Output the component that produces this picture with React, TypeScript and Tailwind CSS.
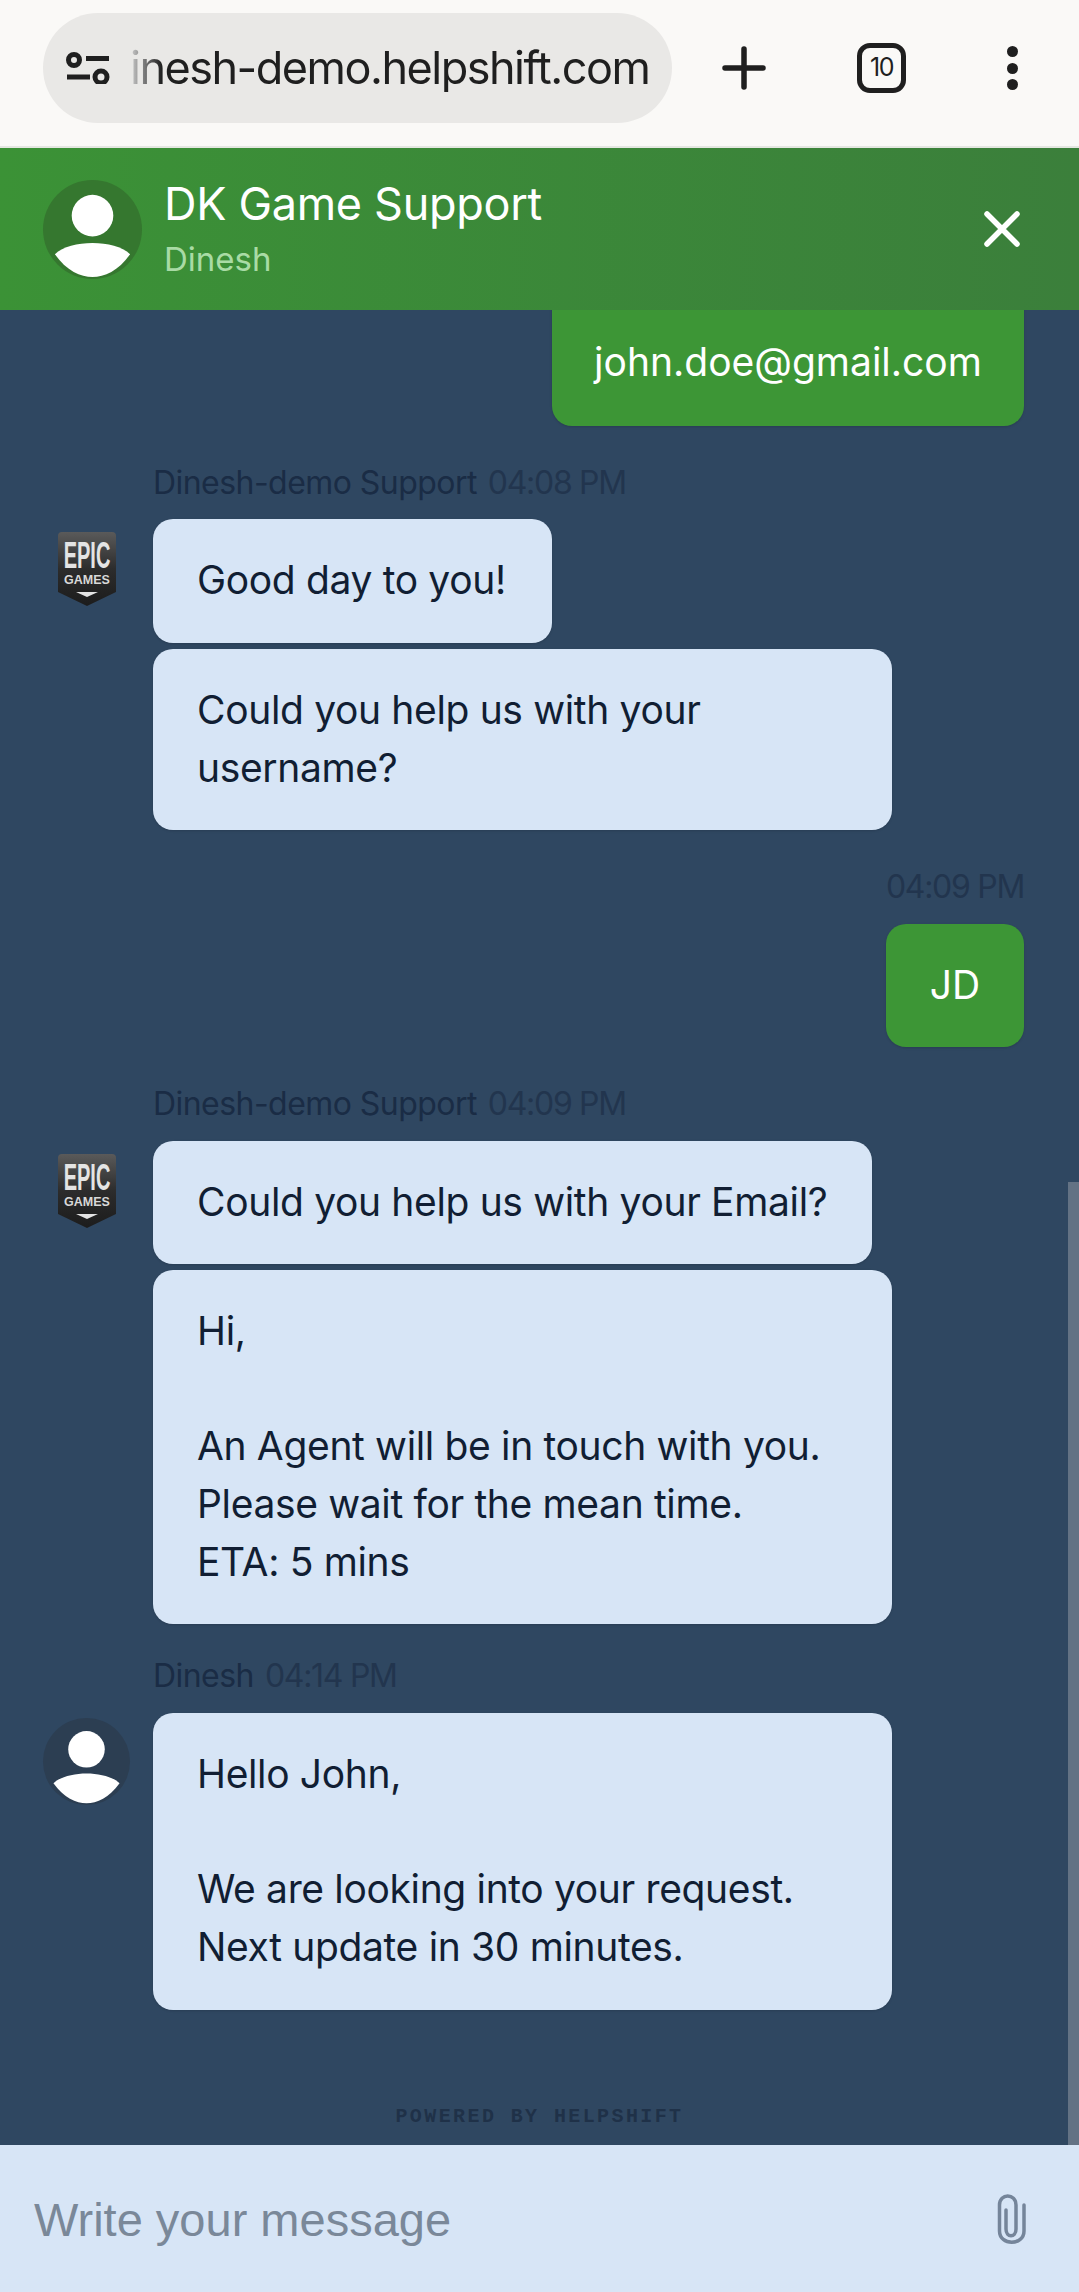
import React from 'react';

const font = "font-['Inter',sans-serif]";

const PersonIcon = () => (
  <svg viewBox="0 0 100 100" className="w-full h-full">
    <circle cx="50" cy="36" r="21" fill="#fff" />
    <path d="M12 75 C28 60 72 60 88 75 C76 92 62 98 50 98 C38 98 24 92 12 75 Z" fill="#fff" />
  </svg>
);

const EpicLogo = () => (
  <svg viewBox="0 0 58 74" className="w-[58px] h-[74px]">
    <defs>
      <linearGradient id="shield" x1="0" y1="0" x2="0" y2="1">
        <stop offset="0" stopColor="#5a5a5a" />
        <stop offset="0.5" stopColor="#2c2c2c" />
        <stop offset="1" stopColor="#1c1c1c" />
      </linearGradient>
    </defs>
    <path d="M4 0 H54 Q58 0 58 4 V60 L29 74 L0 60 V4 Q0 0 4 0 Z" fill="url(#shield)" />
    <text transform="translate(29 36) scale(1 1.8)" textAnchor="middle" fontFamily="Liberation Sans" fontWeight="700" fontSize="20" fill="#e4e4e4">EPIC</text>
    <text x="29" y="52" textAnchor="middle" fontFamily="Liberation Sans" fontWeight="700" fontSize="12.5" fill="#d8d8d8">GAMES</text>
    <path d="M18 60 H40 L29 65 Z" fill="#e4e4e4" />
  </svg>
);

const Meta = ({ name, time }: { name: string; time: string }) => (
  <div className="h-[38px] flex items-center gap-[11px] text-[32px] leading-none whitespace-nowrap">
    {name && <span className="text-[#1a2c45] tracking-[-0.55px]">{name}</span>}
    <span className="text-[#22354e] tracking-[-1.3px]">{time}</span>
  </div>
);

const Bubble = ({ children, className }: { children: React.ReactNode; className: string }) => (
  <div className={`rounded-[20px] bg-[#d7e5f6] pl-[44px] pr-[30px] pt-[32px] text-[39px] tracking-[-0.35px] leading-[57.7px] text-[#111e33] shadow-sm whitespace-pre-line ${className}`}>
    {children}
  </div>
);

const Outgoing = ({ children, className }: { children: React.ReactNode; className: string }) => (
  <div className={`rounded-[20px] bg-[#3d9636] text-white text-[39px] flex items-center justify-center shadow-sm ${className}`}>
    {children}
  </div>
);

const App: React.FC = () => {
  return (
    <div className={`relative w-[1079px] h-[2292px] flex flex-col overflow-hidden bg-[#2f4761] ${font}`}>
      {/* browser chrome */}
      <div className="h-[148px] shrink-0 bg-[#faf9f7] border-b-2 border-[#e4e7e1] flex items-center pl-[43px]">
        <div className="w-[629px] h-[110px] -mt-[10px] rounded-full bg-[#e9e8e6] flex items-center pl-[23px] gap-[20px]">
          <svg viewBox="0 0 44 32" className="w-[44px] h-[32px] shrink-0" fill="none" stroke="#1f1f1f" strokeWidth="5">
            <circle cx="8" cy="8" r="5.5" />
            <path d="M20 6.5 H43" />
            <path d="M1 25 H24" />
            <circle cx="35" cy="25" r="6" />
          </svg>
          <span className="text-[45px] tracking-[-1.5px] leading-none whitespace-nowrap bg-linear-to-r from-[#cfcfcf] to-[#1f1f1f] to-[32px] bg-clip-text text-transparent pb-[2px]">
            inesh-demo.helpshift.com
          </span>
        </div>
        <svg viewBox="0 0 44 44" className="w-[44px] h-[44px] ml-[50px] -mt-[10px]" fill="none" stroke="#1f1f1f" strokeWidth="5.5" strokeLinecap="round">
          <path d="M22 3 V41 M3 22 H41" />
        </svg>
        <div className="w-[49px] h-[50px] ml-[91px] -mt-[10px] rounded-[13px] border-[5px] border-[#1f1f1f] flex items-center justify-center text-[25px] tracking-[-1.5px] text-[#1f1f1f]">
          10
        </div>
        <div className="ml-[101px] -mt-[10px] flex flex-col gap-[5.5px]">
          <span className="w-[11px] h-[11px] rounded-full bg-[#1f1f1f]" />
          <span className="w-[11px] h-[11px] rounded-full bg-[#1f1f1f]" />
          <span className="w-[11px] h-[11px] rounded-full bg-[#1f1f1f]" />
        </div>
      </div>

      {/* chat header */}
      <div className="h-[162px] shrink-0 z-10 bg-linear-to-r from-[#3b9236] to-[#3b7f3b] flex items-center pl-[43px] pr-[59px]">
        <div className="w-[99px] h-[99px] rounded-full bg-[#35772f] overflow-hidden">
          <PersonIcon />
        </div>
        <div className="ml-[22px] flex-1 text-white">
          <div className="text-[45px] leading-[56px] tracking-[-0.3px] mt-[1px]">DK Game Support</div>
          <div className="text-[33px] leading-[48px] mt-[3px] text-[#a9dba5]">Dinesh</div>
        </div>
        <svg viewBox="0 0 36 36" className="w-[36px] h-[36px]" fill="none" stroke="#fff" strokeWidth="5.5" strokeLinecap="round">
          <path d="M3 3 L33 33 M33 3 L3 33" />
        </svg>
      </div>

      {/* messages */}
      <div className="flex-1 min-h-0 overflow-hidden pl-[43px] pr-[55px] flex flex-col">
        <div className="flex justify-end">
          <Outgoing className="w-[472px] h-[140px] -mt-[24px] pt-[12px]">john.doe@gmail.com</Outgoing>
        </div>

        <div className="mt-[38px] pl-[110px]"><Meta name="Dinesh-demo Support" time="04:08 PM" /></div>
        <div className="flex mt-[17px]">
          <div className="w-[110px] shrink-0 pl-[15px] pt-[13px]"><EpicLogo /></div>
          <div className="flex flex-col gap-[6px] items-start">
            <Bubble className="w-[399px] h-[124px]">Good day to you!</Bubble>
            <Bubble className="w-[739px] h-[181px]">{'Could you help us with your\nusername?'}</Bubble>
          </div>
        </div>

        <div className="mt-[38px] flex justify-end"><Meta name="" time="04:09 PM" /></div>
        <div className="flex justify-end mt-[18px]">
          <Outgoing className="w-[138px] h-[123px]">JD</Outgoing>
        </div>

        <div className="mt-[38px] pl-[110px]"><Meta name="Dinesh-demo Support" time="04:09 PM" /></div>
        <div className="flex mt-[18px]">
          <div className="w-[110px] shrink-0 pl-[15px] pt-[13px]"><EpicLogo /></div>
          <div className="flex flex-col gap-[6px] items-start">
            <Bubble className="w-[719px] h-[123px]">Could you help us with your Email?</Bubble>
            <Bubble className="w-[739px] h-[354px]">{'Hi,\n\nAn Agent will be in touch with you.\nPlease wait for the mean time.\nETA: 5 mins'}</Bubble>
          </div>
        </div>

        <div className="mt-[33px] pl-[110px]"><Meta name="Dinesh" time="04:14 PM" /></div>
        <div className="flex mt-[18px]">
          <div className="w-[110px] shrink-0 pt-[5px]">
            <div className="w-[87px] h-[87px] rounded-full bg-[#2c3e52] overflow-hidden"><PersonIcon /></div>
          </div>
          <Bubble className="w-[739px] h-[297px]">{"Hello John,\n\nWe are looking into your request.\nNext update in 30 minutes."}</Bubble>
        </div>

        <div className="mt-[96px] text-center -ml-[43px] -mr-[55px] font-['Liberation_Mono',monospace] font-bold text-[20px] tracking-[2.4px] leading-[22px] text-[#1f3148] whitespace-nowrap">
          POWERED BY HELPSHIFT
        </div>
      </div>

      {/* scrollbar */}
      <div className="absolute right-0 top-[1182px] h-[963px] w-[11px] bg-[#637284]" />

      {/* composer */}
      <div className="h-[147px] shrink-0 bg-[#d7e5f6] flex items-center justify-between pl-[34px] pr-[52px]">
        <span className="font-['Liberation_Sans',sans-serif] text-[47px] text-[#7a8899] leading-none pt-[2px]">Write your message</span>
        <svg viewBox="0 0 30 50" className="w-[30px] h-[50px]" fill="none" stroke="#75859a" strokeWidth="3.5" strokeLinecap="round">
          <path d="M9 16 V35 C9 44 19 44 19 35 V11 C19 -1 2.5 -1 2.5 11 V37 C2.5 52 27 52 27 37 V11" />
        </svg>
      </div>
    </div>
  );
};

export default App;
